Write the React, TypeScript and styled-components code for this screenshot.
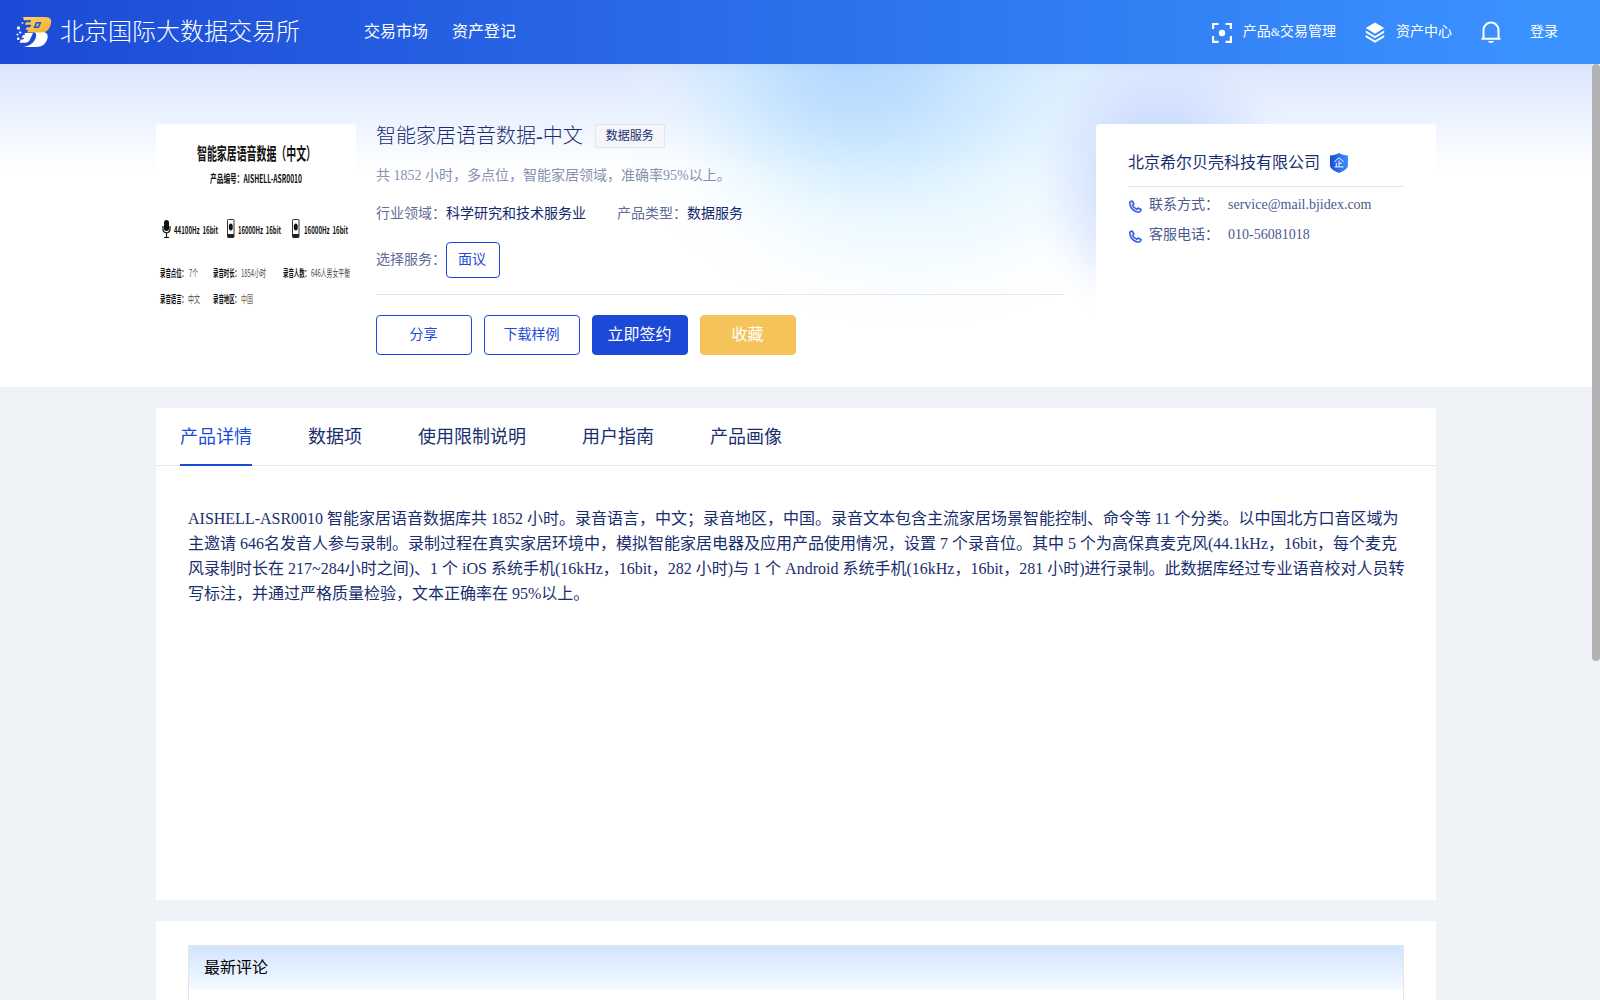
import React from "react";
import styled, { createGlobalStyle } from "styled-components";

const Global = createGlobalStyle`
  * { box-sizing: border-box; }
  html, body, #root { margin: 0; height: 100%; overflow: hidden; }
  body {
    font-family: "Liberation Serif", "Noto Sans CJK SC", serif;
    font-weight: 400;
    font-size: 14px;
    color: #1a2e6e;
    background: #eff3f8;
  }
`;

const Page = styled.div`
  height: 1000px;
  display: flex;
  flex-direction: column;
  overflow: hidden;
`;

const Header = styled.header`
  flex: none;
  height: 64px;
  padding: 0 42px 0 16px;
  display: flex;
  align-items: center;
  justify-content: space-between;
  color: #fff;
  background: linear-gradient(90deg, #1c4ad6 0%, #3a92ff 96%);
`;

const Side = styled.div<{ $gap: number }>`
  display: flex;
  align-items: center;
  gap: ${(p) => p.$gap}px;
`;

const Brand = styled.div`
  display: flex;
  align-items: center;
  gap: 8px;
  margin-right: 40px;
  font-size: 24px;
  font-weight: 300;
  line-height: 32px;
`;

const NavItem = styled.a`
  font-size: 16px;
  line-height: 24px;
`;

const Tool = styled.a<{ $gap?: number }>`
  display: flex;
  align-items: center;
  gap: ${(p) => p.$gap ?? 10}px;
  line-height: 20px;
`;

const Amp = styled.span`
  font-size: 12px;
`;

const Main = styled.main`
  flex: 1;
  min-height: 0;
  display: flex;
`;

const Content = styled.div`
  flex: 1;
  display: flex;
  flex-direction: column;
  overflow: hidden;
`;

const Track = styled.div`
  width: 8px;
`;

const Thumb = styled.div`
  height: 597px;
  border-radius: 4px;
  background: #b2b2b2;
`;

const Hero = styled.section`
  flex: none;
  height: 323px;
  padding: 60px 0 0;
  display: flex;
  justify-content: center;
  background:
    linear-gradient(180deg, rgba(90, 110, 150, 0.05), rgba(90, 110, 150, 0) 8px),
    radial-gradient(ellipse 200px 165px at 850px -5px, rgba(165, 208, 255, 0.7), rgba(168, 210, 255, 0.52) 30%, rgba(172, 214, 255, 0.25) 60%, rgba(178, 218, 255, 0.07) 85%, rgba(180, 220, 255, 0)),
    radial-gradient(ellipse 135px 160px at 1160px 112px, rgba(205, 220, 255, 0.95), rgba(206, 221, 255, 0.88) 40%, rgba(212, 226, 255, 0.5) 68%, rgba(220, 232, 255, 0.13) 88%, rgba(225, 235, 255, 0)),
    radial-gradient(ellipse 300px 250px at 910px 15px, rgba(205, 231, 255, 0.8), rgba(208, 236, 255, 0.7) 30%, rgba(218, 243, 255, 0.48) 60%, rgba(235, 249, 255, 0.16) 85%, rgba(240, 250, 255, 0)),
    linear-gradient(180deg, #dce7fc 0, #eaf1ff 50px, #fff 108px);
`;

const HeroInner = styled.div`
  width: 1280px;
  display: flex;
  align-items: flex-start;
`;

const Cover = styled.div`
  width: 200px;
  height: 200px;
  border-radius: 4px;
  background: #fff;
  overflow: hidden;
`;

const CoverArt = styled.svg`
  display: block;
  font-family: "Noto Sans CJK SC", sans-serif;

  text { white-space: pre; }
`;

const Info = styled.div`
  width: 688px;
  margin: 0 32px 0 20px;
  display: flex;
  flex-direction: column;
`;

const TitleRow = styled.div`
  height: 24px;
  display: flex;
  align-items: center;
  gap: 12px;
`;

const Title = styled.h1`
  margin: 0;
  font-size: 20px;
  font-weight: 300;
  line-height: 24px;
`;

const Tag = styled.span`
  height: 24px;
  padding: 0 10px;
  border: 1px solid #e3e5ea;
  border-radius: 2px;
  background: #f4f6fa;
  font-size: 12px;
  line-height: 22px;
`;

const Desc = styled.p`
  margin: 17px 0 0;
  line-height: 22px;
  color: #8590b2;
`;

const Facts = styled.div<{ $top: number; $height: number }>`
  margin-top: ${(p) => p.$top}px;
  height: ${(p) => p.$height}px;
  display: flex;
  align-items: center;
  gap: 31px;
`;

const Fact = styled.div`
  display: flex;
  align-items: center;
`;

const Label = styled.span`
  width: 70px;
  line-height: 22px;
  color: #5f6c97;
`;

const Value = styled.span`
  line-height: 22px;
  color: #12266a;
`;

const Option = styled.button`
  width: 54px;
  height: 36px;
  padding: 0 2px 4px 0;
  border: 1px solid #1c4ad6;
  border-radius: 4px;
  background: #fff;
  color: #1c4ad6;
  font: inherit;
`;

const Actions = styled.div`
  margin-top: 16px;
  padding-top: 20px;
  border-top: 1px solid #e3e5ea;
  display: flex;
  gap: 12px;
`;

const Action = styled.button<{ $tone?: string }>`
  width: 96px;
  height: 40px;
  padding: 0 1px 4px 0;
  border: 1px solid ${(p) => p.$tone ?? "#1c4ad6"};
  border-radius: 4px;
  background: ${(p) => p.$tone ?? "#fff"};
  color: ${(p) => (p.$tone ? "#fff" : "#1c4ad6")};
  font: inherit;
  font-size: ${(p) => (p.$tone ? 16 : 14)}px;
`;

const Company = styled.aside`
  width: 340px;
  height: 230px;
  padding: 24px 32px 0;
  border-radius: 4px;
  background: #fff;
`;

const CompanyName = styled.div`
  height: 39px;
  padding-bottom: 12px;
  border-bottom: 1px solid #e3e5ea;
  display: flex;
  align-items: center;
  gap: 10px;
  font-size: 16px;
  margin-bottom: 3px;

  svg { margin-top: 4px; }
`;

const Contact = styled.div`
  height: 30px;
  display: flex;
  align-items: center;
  color: #4a598e;
  line-height: 20px;

  svg { margin: 2px 7px 0 1px; }
  span { width: 79px; }
`;

const Panel = styled.section<{ $height: number }>`
  flex: none;
  width: 1280px;
  height: ${(p) => p.$height}px;
  margin: 21px auto 0;
  background: #fff;
`;

const Tabs = styled.nav`
  height: 58px;
  padding: 0 24px;
  border-bottom: 1px solid #e5e6e9;
  display: flex;
  gap: 56px;
`;

const Tab = styled.a<{ $active?: boolean }>`
  height: 58px;
  font-size: 18px;
  line-height: 58px;
  color: ${(p) => (p.$active ? "#1c4ad6" : "#1a2e6e")};
  border-bottom: 2px solid ${(p) => (p.$active ? "#1c4ad6" : "transparent")};
`;

const Article = styled.div`
  padding: 40px 32px 0;
  font-size: 16px;
  line-height: 25px;
  white-space: nowrap;
`;

const Comments = styled.div`
  height: 200px;
  border: 1px solid #e5e6e9;
`;

const CommentsPad = styled.div`
  padding: 24px 32px 0;
`;

const CommentsHead = styled.div`
  height: 44px;
  padding: 0 15px;
  font-size: 16px;
  line-height: 43px;
  color: #000;
  background: linear-gradient(180deg, #d1e4ff, #f5faff);
`;

const Logo = () => (
  <svg width="36" height="32" viewBox="0 0 36 32">
    <defs>
      <linearGradient id="gold" x1="0" y1="0" x2="1" y2="1">
        <stop offset="0" stopColor="#ffd266" />
        <stop offset="1" stopColor="#efb02e" />
      </linearGradient>
    </defs>
    <path d="M19 16h9c3.500.8 4.300 3.500 3.300 7-1.500 5-5.500 8-11 8H8c4.500-1 8.500-3 10.500-6.500 1.800-3.300 2.500-6 .5-8.500z" fill="#fff" />
    <path d="M8.500 17H17l-3 6.500c-1 2.200-2.700 3.200-5 3.200H3.500L5 23.500h2.200l1-1.800H5.500L7 19h2z" fill="#fff" />
    <path d="M7 1h22.500c5 0 6.500 3 5.400 7-1.300 5-4.200 8.500-9.400 8.500H11l1.200-2.700H9.500l1.200-2.500h3.500l1.100-2.600H9l1-2.500h4.500l.7-2H8z" fill="url(#gold)" />
    <path d="M20 6h5.500L23 12h-5.500zM21 7.500L20 10.500h2l1.200-3z" fillRule="evenodd" fill="#2152db" />
    <g fill="#fff">
      <rect x="1" y="10.500" width="3" height="3" rx="1" />
      <rect x="3" y="15.500" width="2.500" height="2" rx="1" />
      <rect x="0.500" y="17.500" width="2" height="2" rx="1" />
      <rect x="1" y="21.500" width="2.500" height="2.500" rx="1" />
    </g>
    <rect x="5.500" y="6" width="2" height="2" rx="1" fill="#ffce5a" />
  </svg>
);

const ScanIcon = () => (
  <svg width="22" height="22" viewBox="0 0 22 22" fill="none" stroke="#fff" strokeWidth="2.200">
    <path d="M2.100 8V3h5.400M14.500 3h5.400v5M19.900 15v5.800h-5.400M7.500 20.800H2.100V15" />
    <circle cx="11" cy="12" r="3.200" fill="#fff" stroke="none" />
  </svg>
);

const LayersIcon = () => (
  <svg width="20" height="22" viewBox="0 0 20 22" fill="#fff">
    <path d="M10 1.500l9.200 5.600L10 12.700.8 7.100z" />
    <path d="M.8 9.500v2.200L10 17.200l9.200-5.500V9.500L10 15zM.8 14v2.200L10 21.700l9.200-5.500V14L10 19.500z" />
  </svg>
);

const BellIcon = () => (
  <svg width="20" height="23" viewBox="0 0 20 23" fill="none" stroke="#fff" strokeWidth="2">
    <path d="M2.500 18V9a7.500 7.500 0 0 1 15 0v9M.5 17.800h19" />
    <path d="M7 20h6c-.5 1.300-1.600 2-3 2s-2.500-.7-3-2z" fill="#fff" stroke="none" />
  </svg>
);

const ShieldIcon = () => (
  <svg width="18" height="20" viewBox="0 0 18 20">
    <defs>
      <linearGradient id="shield" x1="0" y1="0" x2="1" y2="0">
        <stop offset="0" stopColor="#1c4ad6" />
        <stop offset="1" stopColor="#3a92ff" />
      </linearGradient>
    </defs>
    <path d="M9 0c2.500 1.700 5.500 2.300 9 2.500V12c0 4-4.500 6-9 8-4.500-2-9-4-9-8V2.500C3.500 2.300 6.500 1.700 9 0z" fill="url(#shield)" />
    <path d="M4.300 8.800L9 4.800l4.700 4M9 7.500v6.200M9 10.200h3M6.300 9.800v3.900M4.500 13.900h9" fill="none" stroke="#fff" strokeWidth="1" />
  </svg>
);

const PhoneIcon = () => (
  <svg width="13" height="13" viewBox="0 0 13 13" fill="none" stroke="#3a63de" strokeWidth="1.700" strokeLinejoin="round">
    <path d="M1 1.800L3.300 1.100l1.500 2.900-1.200 1.300c.7 1.900 2.100 3.200 4.200 4l1.300-1.300 2.900 1.500-.7 1.900c-.4.700-1.500.8-2.700.6C4.600 11.300 1.200 7.700.9 3.700c0-.7 0-1.400.1-1.900z" />
  </svg>
);

const naturalWidth = (text: string, size: number) =>
  [...text].reduce((sum, ch) => sum + (ch.charCodeAt(0) > 255 ? 1 : ch === " " ? 0.22 : 0.57), 0) * size;

type CoverTextProps = { x: number; y: number; w: number; s: number; b?: boolean; c?: string; children: string };
const CoverText = ({ x, y, w, s, b, c = "#111", children }: CoverTextProps) => {
  const natural = naturalWidth(children, s);
  return (
    <text
      transform={`translate(${x} ${y}) scale(${w / natural} 1)`}
      fontSize={s}
      fontWeight={b ? 700 : 400}
      fill={c}
      textLength={natural}
      lengthAdjust="spacingAndGlyphs"
    >
      {children}
    </text>
  );
};

const Handset = ({ x }: { x: number }) => (
  <g transform={`translate(${x} 95)`}>
    <rect x="0.500" y="0.500" width="6.500" height="18" rx="0.800" fill="#fff" stroke="#333" />
    <rect x="0.500" y="15" width="6.500" height="3.500" fill="#222" />
    <ellipse cx="3.800" cy="8" rx="2" ry="3.500" fill="#111" />
  </g>
);

const CoverPicture = () => (
  <CoverArt width="200" height="200" viewBox="0 0 200 200">
    <CoverText x={41} y={36} w={119} s={17} b>智能家居语音数据（中文）</CoverText>
    <CoverText x={54} y={59} w={92} s={11} b>产品编号：AISHELL-ASR0010</CoverText>
    <rect x="8" y="96" width="5" height="11" rx="2.500" fill="#111" />
    <path d="M7 102v3c0 5 7 5 7 0v-3M10.500 109v4M8 113.500h5" fill="none" stroke="#111" strokeWidth="1.200" />
    <CoverText x={18} y={110} w={44} s={10} b>{"44100Hz  16bit"}</CoverText>
    <Handset x={71} />
    <CoverText x={82} y={110} w={43} s={10} b>{"16000Hz  16bit"}</CoverText>
    <Handset x={136} />
    <CoverText x={148} y={110} w={44} s={10} b>{"16000Hz  16bit"}</CoverText>
    <CoverText x={4} y={153} w={27} s={10} b>录音点位：</CoverText>
    <CoverText x={33} y={153} w={9} s={10} c="#444">7个</CoverText>
    <CoverText x={57} y={153} w={27} s={10} b>录音时长：</CoverText>
    <CoverText x={85} y={153} w={25} s={10} c="#444">1854小时</CoverText>
    <CoverText x={127} y={153} w={27} s={10} b>录音人数：</CoverText>
    <CoverText x={155} y={153} w={39} s={10} c="#444">646人男女平衡</CoverText>
    <CoverText x={4} y={179} w={27} s={10} b>录音语言：</CoverText>
    <CoverText x={32} y={179} w={12} s={10} c="#444">中文</CoverText>
    <CoverText x={57} y={179} w={27} s={10} b>录音地区：</CoverText>
    <CoverText x={85} y={179} w={12} s={10} c="#6b5a48">中国</CoverText>
  </CoverArt>
);

const tabs = ["产品详情", "数据项", "使用限制说明", "用户指南", "产品画像"];

const lines = [
  "AISHELL-ASR0010 智能家居语音数据库共 1852 小时。录音语言，中文；录音地区，中国。录音文本包含主流家居场景智能控制、命令等 11 个分类。以中国北方口音区域为",
  "主邀请 646名发音人参与录制。录制过程在真实家居环境中，模拟智能家居电器及应用产品使用情况，设置 7 个录音位。其中 5 个为高保真麦克风(44.1kHz，16bit，每个麦克",
  "风录制时长在 217~284小时之间)、1 个 iOS 系统手机(16kHz，16bit，282 小时)与 1 个 Android 系统手机(16kHz，16bit，281 小时)进行录制。此数据库经过专业语音校对人员转",
  "写标注，并通过严格质量检验，文本正确率在 95%以上。",
];

export default function App() {
  return (
    <Page lang="zh-CN">
      <Global />
      <Header>
        <Side $gap={24}>
          <Brand><Logo />北京国际大数据交易所</Brand>
          <NavItem>交易市场</NavItem>
          <NavItem>资产登记</NavItem>
        </Side>
        <Side $gap={29}>
          <Tool><ScanIcon /><span>产品<Amp>&amp;</Amp>交易管理</span></Tool>
          <Tool $gap={11}><LayersIcon />资产中心</Tool>
          <Tool><BellIcon /></Tool>
          <Tool>登录</Tool>
        </Side>
      </Header>
      <Main>
        <Content>
          <Hero>
            <HeroInner>
              <Cover><CoverPicture /></Cover>
              <Info>
                <TitleRow>
                  <Title>智能家居语音数据-中文</Title>
                  <Tag>数据服务</Tag>
                </TitleRow>
                <Desc>共 1852 小时，多点位，智能家居领域，准确率95%以上。</Desc>
                <Facts $top={16} $height={22}>
                  <Fact><Label>行业领域：</Label><Value>科学研究和技术服务业</Value></Fact>
                  <Fact><Label>产品类型：</Label><Value>数据服务</Value></Fact>
                </Facts>
                <Facts $top={17} $height={36}>
                  <Fact><Label>选择服务：</Label><Option>面议</Option></Fact>
                </Facts>
                <Actions>
                  <Action>分享</Action>
                  <Action>下载样例</Action>
                  <Action $tone="#1c4ad6">立即签约</Action>
                  <Action $tone="#f4c35a">收藏</Action>
                </Actions>
              </Info>
              <Company>
                <CompanyName>北京希尔贝壳科技有限公司<ShieldIcon /></CompanyName>
                <Contact><PhoneIcon /><span>联系方式：</span>service@mail.bjidex.com</Contact>
                <Contact><PhoneIcon /><span>客服电话：</span>010-56081018</Contact>
              </Company>
            </HeroInner>
          </Hero>
          <Panel $height={492}>
            <Tabs>
              {tabs.map((t, i) => <Tab key={t} $active={i === 0}>{t}</Tab>)}
            </Tabs>
            <Article>
              {lines.map((l) => <div key={l}>{l}</div>)}
            </Article>
          </Panel>
          <Panel $height={300}>
            <CommentsPad>
              <Comments><CommentsHead>最新评论</CommentsHead></Comments>
            </CommentsPad>
          </Panel>
        </Content>
        <Track><Thumb /></Track>
      </Main>
    </Page>
  );
}
